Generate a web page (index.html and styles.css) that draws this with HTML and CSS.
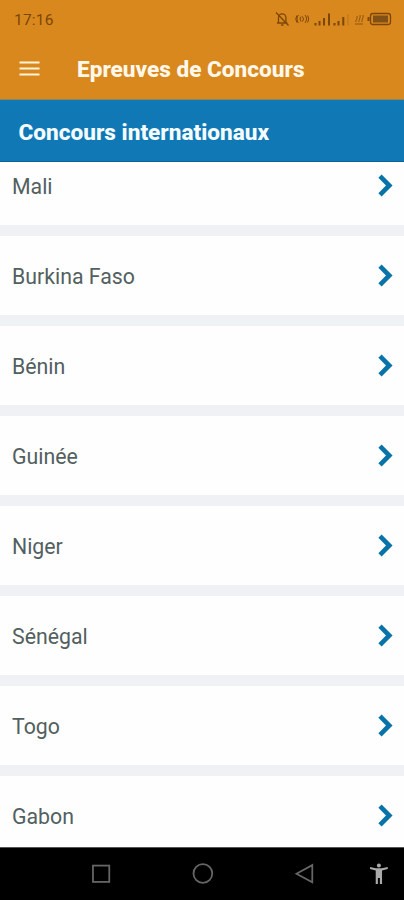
FILE: index.html
```
<!DOCTYPE html>
<html lang="fr">
<head>
<meta charset="utf-8">
<title>Epreuves de Concours</title>
<link rel="stylesheet" href="styles.css">
</head>
<body>
<svg class="defs" width="0" height="0"><symbol id="chevron" viewBox="0 0 18 26"><path d="M3 3.200 12.300 12.500 3 21.800" fill="none" stroke="#0873a8" stroke-width="4.600"/></symbol></svg>
<div class="status">
  <span class="clock">17:16</span>
  <svg class="status-icons" width="118" height="18" viewBox="0 0 118 18" fill="none" stroke="#7c4609" stroke-width="1.3">
    <path d="M3 13h10.500M4.500 13V7.500a3.700 3.700 0 0 1 7.400 0V13M7 15h2.500M2 2.500 14.500 15.500"/>
    <path d="M24.500 5a6 6 0 0 0 0 8M27 6.500a4 4 0 0 0 0 5M31 5a6 6 0 0 1 0 8M28.500 6.500a4 4 0 0 1 0 5M22.800 5.500a7 7 0 0 0 0 7M33.700 5.500a7 7 0 0 1 0 7" stroke-width="1"/>
    <path d="M41.500 13v2.500M45.500 11v4.500M50 8v7.500M55 3.500v12M60.500 13v2.500M64.500 11v4.500M69.300 7v8.500" stroke-width="2"/>
    <path d="M74 4v11.500" stroke-width="1.500" opacity=".2"/>
    <path d="M81 14h8M82 12c-1-2 2-3 1-6M85 12c-1-2 2-4 1-7M88 12c-1-2 2-4 1-7" stroke-width="1" opacity=".8"/>
    <rect x="96.500" y="3.500" width="20" height="11" rx="2.500"/>
    <path d="M94.500 7v4" stroke-width="2"/>
    <rect x="99" y="5.500" width="15" height="7" fill="#805017" stroke="none"/>
  </svg>
</div>
<header class="appbar">
  <svg class="menu" width="21" height="16" viewBox="0 0 21 16" stroke="#fff3dc" stroke-width="2"><path d="M.5 1.500h20M.5 7.500h20M.5 13.500h20"/></svg>
  <h1>Epreuves de Concours</h1>
</header>
<h2 class="section">Concours internationaux</h2>
<main class="list">
  <div class="row"><span>Mali</span><svg class="go"><use href="#chevron"/></svg></div>
  <div class="row"><span>Burkina Faso</span><svg class="go"><use href="#chevron"/></svg></div>
  <div class="row"><span>Bénin</span><svg class="go"><use href="#chevron"/></svg></div>
  <div class="row"><span>Guinée</span><svg class="go"><use href="#chevron"/></svg></div>
  <div class="row"><span>Niger</span><svg class="go"><use href="#chevron"/></svg></div>
  <div class="row"><span>Sénégal</span><svg class="go"><use href="#chevron"/></svg></div>
  <div class="row"><span>Togo</span><svg class="go"><use href="#chevron"/></svg></div>
  <div class="row"><span>Gabon</span><svg class="go"><use href="#chevron"/></svg></div>
</main>
<nav class="navbar">
  <svg width="22" height="22" viewBox="0 0 22 22"><rect x="3" y="2.500" width="16.500" height="16.500"/></svg>
  <svg width="22" height="22" viewBox="0 0 22 22"><circle cx="11" cy="10.500" r="9.500"/></svg>
  <svg width="22" height="22" viewBox="0 0 22 22"><path d="M2.500 10.700 18.500 2v17.400z"/></svg>
  <svg class="person" width="20" height="22" viewBox="0 0 20 22"><circle cx="10" cy="2.500" r="2"/><path d="M1 4 7 5.200h6L19 4v2L13.200 7.500v13.500h-2.200v-6H9v6H6.800V7.500L1 6z"/></svg>
</nav>
</body>
</html>
```
FILE: styles.css
```
* { box-sizing: border-box; }
body {
  margin: 0;
  width: 404px;
  height: 900px;
  display: flex;
  flex-direction: column;
  overflow: hidden;
  font-family: Roboto, sans-serif;
  background: #fefefe;
}
.defs { position: absolute; }
.status {
  height: 38px;
  padding: 0 12px 0 14px;
  display: flex;
  align-items: center;
  justify-content: space-between;
  background: #d9881d;
}
.clock {
  padding-top: 1px;
  font-size: 15.5px;
  letter-spacing: 0.2px;
  color: #7c4609;
}
.appbar {
  height: 62px;
  padding: 0 20px 0 19px;
  display: flex;
  align-items: center;
  background: #d9881d;
  border-bottom: 1px solid #8c865a;
}
.menu { margin-right: 37px; }
h1, h2 {
  margin: 0;
  font-weight: 800;
  white-space: nowrap;
}
h1 {
  padding-top: 1px;
  font-size: 22.6px;
  color: #fff8ea;
}
.section {
  height: 62px;
  padding: 3px 18px 0 18.5px;
  line-height: 60px;
  font-size: 22.6px;
  color: #f4fcff;
  background: #1079b5;
  border-bottom: 1px solid #06649a;
}
.list {
  height: 685px;
  display: flex;
  flex-direction: column;
  gap: 11px;
  overflow: hidden;
  background: #eff1f4;
}
.row {
  flex: 0 0 79px;
  display: flex;
  align-items: center;
  justify-content: space-between;
  padding: 0 9px 0 12px;
  font-size: 21.3px;
  color: #52605f;
  background: #fefefe;
}
.row span { padding-top: 1px; }
.row:first-child { margin-top: -16px; }
.go { width: 18px; height: 26px; }
.navbar {
  height: 53px;
  padding: 0 15px 0 90px;
  display: flex;
  align-items: center;
  background: #000;
  border-top: 1px solid #555;
}
.navbar svg {
  margin-right: 80px;
  fill: none;
  stroke: #666;
  stroke-width: 1.8;
}
.navbar svg:nth-child(3) { margin-right: 54px; }
.navbar .person {
  margin-right: 0;
  fill: #aaa;
  stroke: none;
}
```
